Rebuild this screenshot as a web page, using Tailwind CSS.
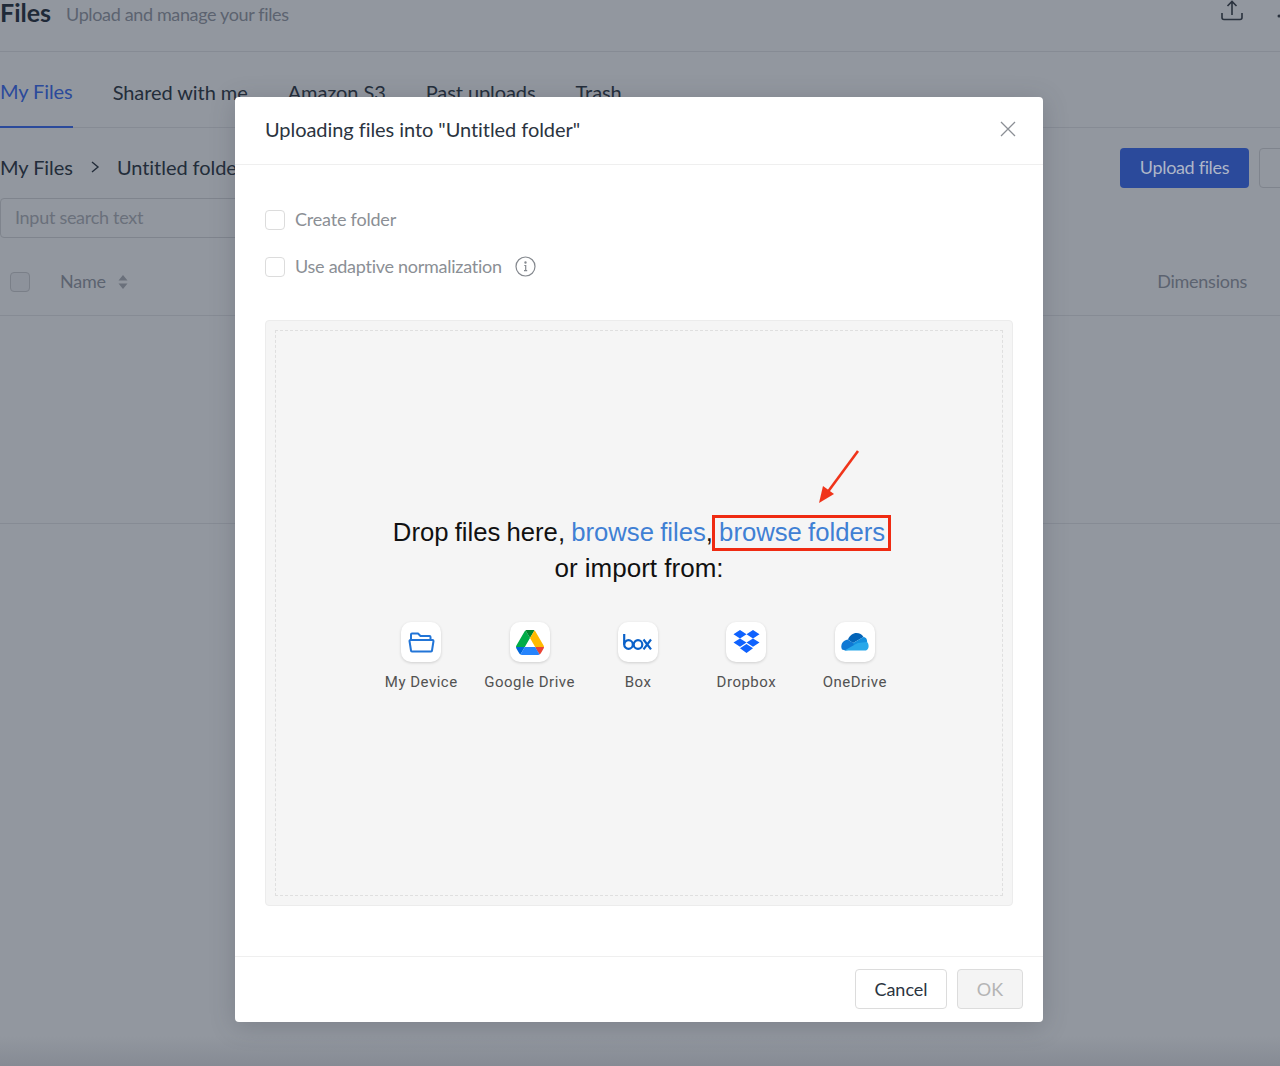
<!DOCTYPE html>
<html lang="en">
  <head>
    <meta charset="UTF-8" />
    <meta name="viewport" content="width=device-width, initial-scale=1.0" />
    <title>Files</title>
    <script src="https://cdn.jsdelivr.net/npm/@tailwindcss/browser@4"></script>
  </head>
  <body class="bg-[#92979f] font-['Lato',sans-serif]">
    <div class="relative w-[1280px] h-[1066px] overflow-hidden bg-[#92979f]">
      <!-- Page behind the modal -->
      <div class="flex h-[52px] items-start justify-between border-b border-[#868b94]">
        <div class="flex items-baseline gap-[15px] -mt-[4px]">
          <h1 class="text-[25px] leading-[32px] font-bold text-[#1f2a38]">Files</h1>
          <span class="-translate-y-px text-[18px] tracking-[-0.36px] text-[#5c6370]">Upload and manage your files</span>
        </div>
        <div class="flex gap-[34px] mr-[-9px]">
          <svg class="w-[22px] h-[21px]" viewBox="0 0 22 21" fill="none" stroke="#2a323e" stroke-width="1.600">
            <path d="M11 15V1.500M6.500 6 11 1.500 15.500 6M1 13v4.500a2 2 0 0 0 2 2h16a2 2 0 0 0 2-2V13" />
          </svg>
          <svg class="w-[12px] h-[21px]" viewBox="0 0 12 21" fill="#2a323e">
            <circle cx="2" cy="16" r="1.500" />
            <circle cx="8" cy="16" r="1.500" />
          </svg>
        </div>
      </div>

      <nav class="flex h-[76px] gap-10 border-b border-[#868b94] text-[20px] tracking-[-0.08px] text-[#232d3a]">
        <a class="flex h-[76px] items-center border-b-2 border-[#2b4a9b] pt-[4px] text-[#2b4a9b]">My Files</a>
        <a class="flex items-center pt-[4px]">Shared with me</a>
        <a class="flex items-center pt-[4px]">Amazon S3</a>
        <a class="flex items-center pt-[4px]">Past uploads</a>
        <a class="flex items-center pt-[4px]">Trash</a>
      </nav>

      <div class="flex items-start justify-between pt-5">
        <div class="flex items-center text-[20px] leading-[38px] tracking-[-0.05px] text-[#232d3a]">
          <span>My Files</span>
          <svg class="mx-[17px] w-[10px] h-[14px]" viewBox="0 0 10 14" fill="none" stroke="#232d3a" stroke-width="1.400">
            <path d="M2 2l6 5-6 5" />
          </svg>
          <span>Untitled folder</span>
        </div>
        <div class="flex gap-[10px] mr-[-40px]">
          <button class="h-10 w-[129px] rounded bg-[#2b4a9b] pb-[2px] text-[18px] tracking-[-0.33px] text-[#aeb6c8]">Upload files</button>
          <button class="h-10 w-[61px] rounded border border-[#7f848d]"></button>
        </div>
      </div>

      <div class="mt-[10px] h-10 w-[300px] rounded border border-[#7f848d] px-[14px] text-[18px] leading-[37px] tracking-[-0.29px] text-[#6a707b]">
        Input search text
      </div>

      <div class="mt-[14px] flex h-[64px] items-center justify-between border-b border-[#868b94] pl-[10px] pr-[33px] pb-[4px] text-[18px] tracking-[-0.25px] text-[#5c6370]">
        <div class="flex items-center">
          <span class="h-5 w-5 rounded border border-[#7a7f88] bg-[#8d929b]"></span>
          <span class="ml-[30px]">Name</span>
          <svg class="ml-[11px] w-[12px] h-[16px]" viewBox="0 0 12 16" fill="#6a707b">
            <path d="M6 1l4.500 5.500h-9zM6 15l4.500-5.500h-9z" />
          </svg>
        </div>
        <span>Dimensions</span>
      </div>

      <div class="h-[208px] border-b border-[#868b94]"></div>

      <!-- Darker band at the bottom edge -->
      <div class="absolute inset-x-0 bottom-0 h-[30px] bg-gradient-to-b from-transparent to-[#868b94]"></div>

      <!-- Upload modal -->
      <div class="absolute inset-0 flex justify-center pt-[97px]">
        <div class="flex h-[925px] w-[808px] -translate-x-[1px] flex-col rounded bg-white shadow-[0_4px_24px_rgba(60,65,75,0.25)]">
          <div class="flex h-[68px] shrink-0 items-center justify-between border-b border-[#efefef] pb-[3px] pl-[30px] pr-[27px]">
            <h2 class="text-[20px] tracking-[-0.06px] text-[#2b3440]">Uploading files into "Untitled folder"</h2>
            <svg class="h-[16px] w-[16px]" viewBox="0 0 16 16" fill="none" stroke="#8b8f95" stroke-width="1.300">
              <path d="M1 1l14 14M15 1 1 15" />
            </svg>
          </div>

          <div class="flex flex-1 flex-col px-[30px] pt-[35px] text-[18px] tracking-[-0.2px] text-[#8b8f95]">
            <label class="flex h-[40px] items-center gap-[10px] leading-[24px]">
              <span class="h-5 w-5 rounded border border-[#dcdcdc] bg-white"></span>
              <span class="-mt-[2px]">Create folder</span>
            </label>
            <label class="mt-[7px] flex h-[40px] items-center gap-[10px] leading-[24px]">
              <span class="h-5 w-5 rounded border border-[#dcdcdc] bg-white"></span>
              <span class="-mt-[2px] tracking-[-0.27px]">Use adaptive normalization</span>
              <svg class="ml-[3px] -mt-[1px] h-[21px] w-[21px]" viewBox="0 0 21 21" fill="none" stroke="#85898f" stroke-width="1.200">
                <circle cx="10.500" cy="10.500" r="9.500" />
                <path d="M9.300 9.500h1.400v5M9 14.700h3.200" />
                <circle cx="10.500" cy="6.500" r="0.600" fill="#85898f" />
              </svg>
            </label>

            <div class="mt-[33px] h-[586px] rounded border border-[#ececec] bg-[#f5f5f5] p-[9px] tracking-normal">
              <div class="relative flex h-full flex-col items-center border border-dashed border-[#dfdfdf] pt-[183px]">
                <p class="w-full text-center font-['Liberation_Sans',sans-serif] text-[26px] leading-[36px] text-[#111]">
                  <span class="text-[25.700px] [word-spacing:-1px]">Drop files here, <span class="text-[#3f80d4]">browse files</span>, <span class="text-[#3f80d4]">browse folders</span></span><br />or import from:
                </p>

                <div class="mt-[36px] ml-[-2px] flex font-['Roboto',sans-serif] text-[15px] tracking-[0.5px] text-[#525252]">
                  <div class="flex w-[108.400px] flex-col items-center">
                    <span class="flex h-10 w-10 items-center justify-center rounded-[10px] bg-white shadow-[0_1px_3px_rgba(0,0,0,0.16)]">
                      <svg class="h-[21px] w-[27px]" viewBox="0 0 27 21" fill="none" stroke="#2275d7" stroke-width="2" stroke-linejoin="round">
                        <path d="M3 8V2.500a1 1 0 0 1 1-1h6l2.500 2.500h9a1 1 0 0 1 1 1V8" />
                        <path d="M1.500 9a1 1 0 0 1 1-1h22a1 1 0 0 1 1 1l-1.500 9.500a1 1 0 0 1-1 1H4a1 1 0 0 1-1-1z" />
                      </svg>
                    </span>
                    <span class="mt-[10px] leading-[20px]">My Device</span>
                  </div>
                  <div class="flex w-[108.400px] flex-col items-center">
                    <span class="flex h-10 w-10 items-center justify-center rounded-[10px] bg-white shadow-[0_1px_3px_rgba(0,0,0,0.16)]">
                      <svg class="h-[25px] w-[28px]" viewBox="0 0 87.300 78">
                        <path fill="#0066da" d="m6.600 66.850 3.850 6.650c.8 1.400 1.950 2.500 3.300 3.300l13.750-23.800h-27.500c0 1.550.4 3.100 1.200 4.500z" />
                        <path fill="#00ac47" d="m43.650 25-13.750-23.800c-1.350.8-2.500 1.900-3.300 3.300l-25.400 44a9.060 9.060 0 0 0 -1.200 4.500h27.500z" />
                        <path fill="#ea4335" d="m73.550 76.800c1.350-.8 2.500-1.900 3.300-3.300l1.600-2.750 7.650-13.250c.8-1.400 1.200-2.950 1.200-4.500h-27.502l5.852 11.500z" />
                        <path fill="#00832d" d="m43.650 25 13.750-23.800c-1.350-.8-2.900-1.200-4.500-1.200h-18.500c-1.600 0-3.150.45-4.500 1.200z" />
                        <path fill="#2684fc" d="m59.800 53h-32.300l-13.750 23.800c1.350.8 2.900 1.200 4.500 1.200h50.800c1.600 0 3.150-.45 4.500-1.200z" />
                        <path fill="#ffba00" d="m73.400 26.500-12.700-22c-.8-1.400-1.950-2.500-3.300-3.300l-13.750 23.800 16.150 28h27.450c0-1.550-.4-3.100-1.200-4.500z" />
                      </svg>
                    </span>
                    <span class="mt-[10px] leading-[20px]">Google Drive</span>
                  </div>
                  <div class="flex w-[108.400px] flex-col items-center">
                    <span class="flex h-10 w-10 items-center justify-center rounded-[10px] bg-white shadow-[0_1px_3px_rgba(0,0,0,0.16)]">
                      <svg class="h-[16px] w-[29px]" viewBox="0 0 29 16" fill="none" stroke="#0a61c9" stroke-width="2.200">
                        <path d="M1.200 0v10.500" />
                        <circle cx="5.500" cy="10.500" r="4.300" />
                        <circle cx="15" cy="10.500" r="4.300" />
                        <path d="M20.500 5.500l7.500 9.800M28 5.500l-7.500 9.800" />
                      </svg>
                    </span>
                    <span class="mt-[10px] leading-[20px]">Box</span>
                  </div>
                  <div class="flex w-[108.400px] flex-col items-center">
                    <span class="flex h-10 w-10 items-center justify-center rounded-[10px] bg-white shadow-[0_1px_3px_rgba(0,0,0,0.16)]">
                      <svg class="h-[24px] w-[27px]" viewBox="0 0 27 24" fill="#0f62fe">
                        <path d="M7 0l6.500 4.200L7 8.400.5 4.200zM20 0l6.500 4.200L20 8.400l-6.500-4.200zM7 8.400l6.500 4.200L7 16.800.5 12.600zM20 8.400l6.500 4.200L20 16.800l-6.500-4.200zM13.500 14l6.500 4.200-6.500 4.800L7 18.200z" />
                      </svg>
                    </span>
                    <span class="mt-[10px] leading-[20px]">Dropbox</span>
                  </div>
                  <div class="flex w-[108.400px] flex-col items-center">
                    <span class="flex h-10 w-10 items-center justify-center rounded-[10px] bg-white shadow-[0_1px_3px_rgba(0,0,0,0.16)]">
                      <svg class="h-[18px] w-[28px]" viewBox="0 0 28 18">
                        <path fill="#0364b8" d="M7 6.500C8.500 2.500 12 0 15.500 0c3 0 5.500 1.500 7 4L12 10z" />
                        <path fill="#0f78d4" d="M1 16.500C-1 12 1.500 7.500 6.500 6.500l6 3.500 6 5-14 2.500z" />
                        <path fill="#1490df" d="M12 10l10.500-6c3 .3 4 3.500 3.500 5.500L14 15z" />
                        <path fill="#28a8ea" d="M3.500 17.500 14 11.500l3-1.500 9-1c2.500 2.500 2 7-1 8.500z" />
                      </svg>
                    </span>
                    <span class="mt-[10px] leading-[20px]">OneDrive</span>
                  </div>
                </div>

                <!-- Red annotation over the link -->
                <span class="absolute left-[436px] top-[184px] h-[36px] w-[179px] border-[3px] border-[#ef2b12]"></span>
                <svg class="absolute left-[539px] top-[114px] h-[60px] w-[46px]" viewBox="0 0 46 60" fill="none">
                  <path d="M43 6 12 48" stroke="#f0341a" stroke-width="2.600" />
                  <path d="M4 58l4-17 11 8z" fill="#f0341a" />
                </svg>
              </div>
            </div>
          </div>

          <div class="flex h-[66px] shrink-0 items-start justify-end gap-[10px] border-t border-[#efefef] pr-5 pt-[12px] text-[18px]">
            <button class="h-10 w-[92px] rounded border border-[#dcdcdc] bg-white text-[#2b3440]">Cancel</button>
            <button class="h-10 w-[66px] rounded border border-[#dcdcdc] bg-[#f4f4f4] text-[#b5b5b5]">OK</button>
          </div>
        </div>
      </div>
    </div>
  </body>
</html>
